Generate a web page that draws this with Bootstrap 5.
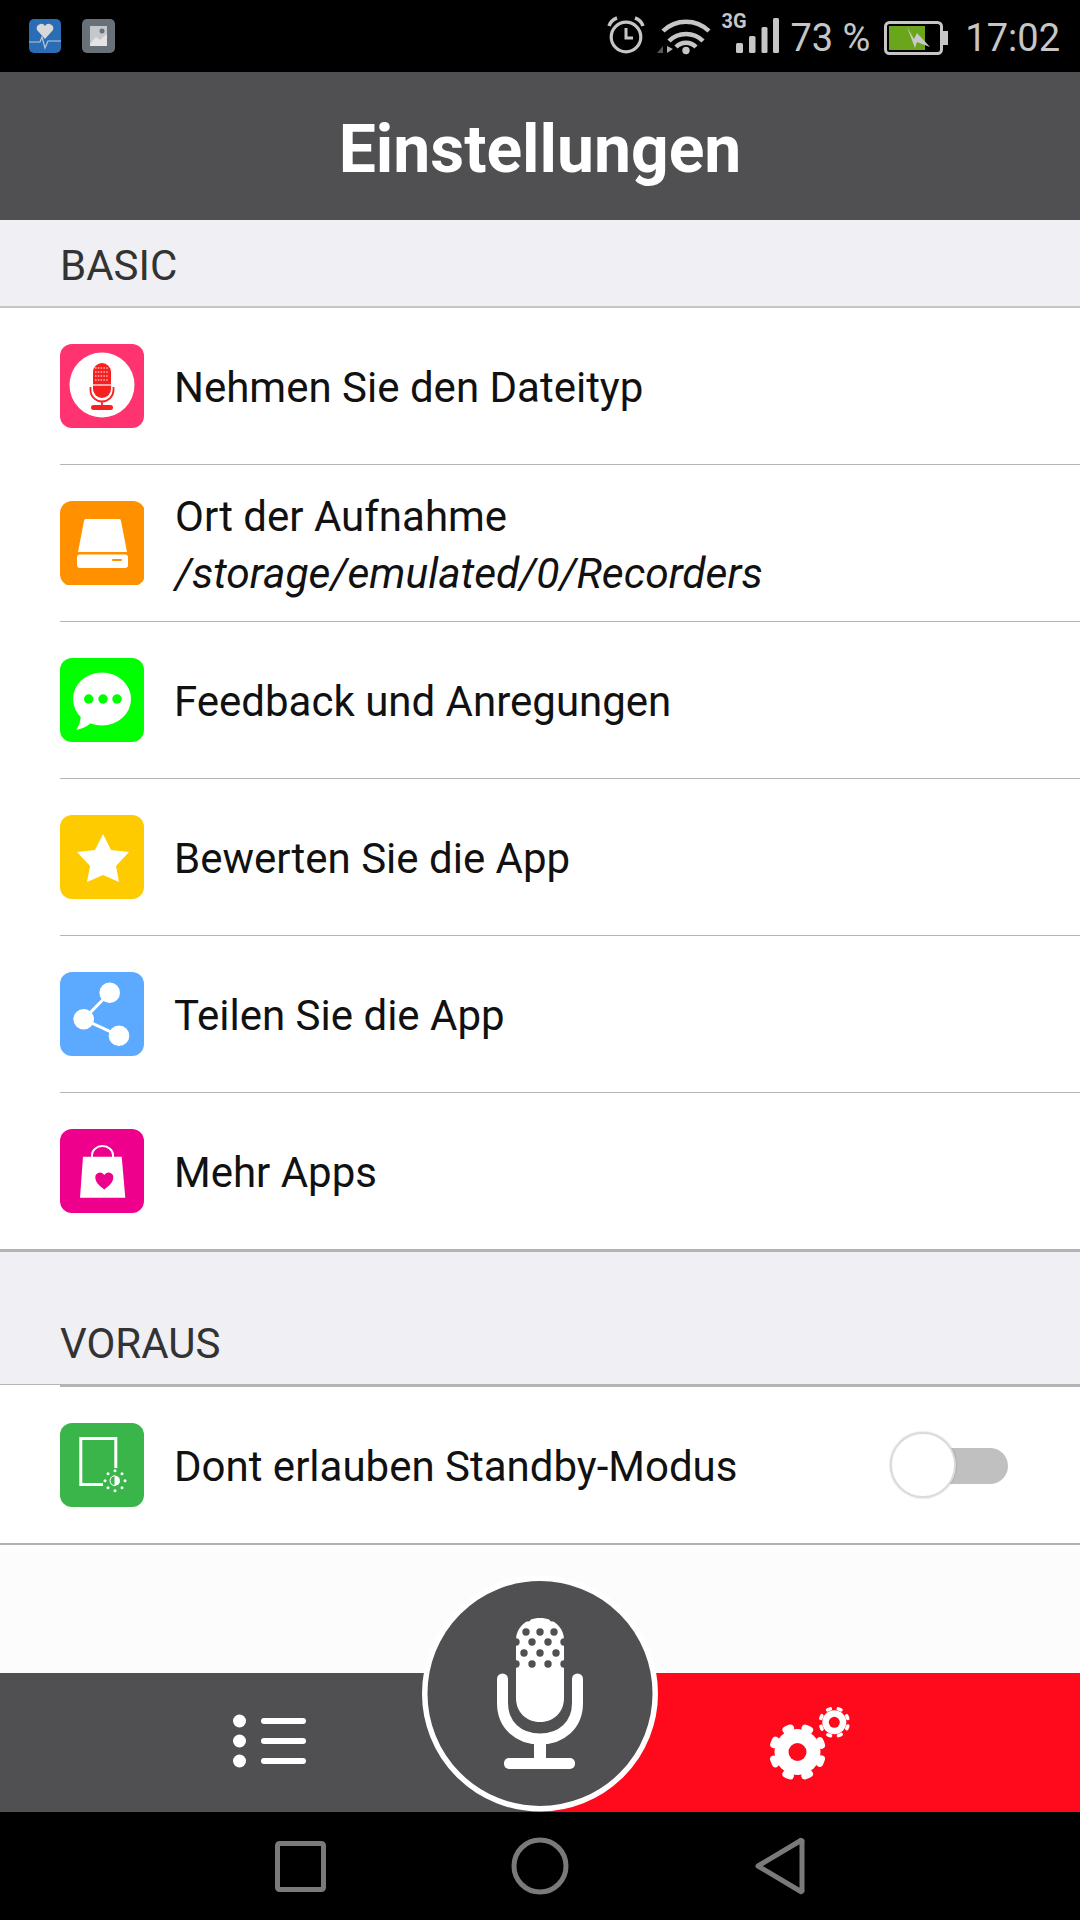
<!DOCTYPE html>
<html lang="de">
<head>
<meta charset="UTF-8">
<meta name="viewport" content="width=device-width, initial-scale=1.0">
<title>Einstellungen</title>
<link href="https://cdn.jsdelivr.net/npm/bootstrap@5.3.5/dist/css/bootstrap.min.css" rel="stylesheet">
<style>
html, body { margin: 0; width: 1080px; height: 1920px; overflow: hidden; }
body { font-family: Roboto, "Liberation Sans", sans-serif; background: #fff; color: #111; }
.app-frame { width: 1080px; height: 1920px; }
.status-strip { height: 72px; background: #000; color: #c6c6c6; font-size: 38px; padding: 13px 20px 0 29px; line-height: 1; }
.status-strip svg { display: block; }
.status-num { margin-top: 6px; }
.title-strip { height: 148px; background: #505052; color: #fff; font-size: 66px; font-weight: 700; padding-top: 6px; }
.section-strip { background: #efeff4; color: #333; font-size: 42px; padding: 0 0 15px 60px; line-height: 1.2; position: relative; }
.section-first { height: 88px; border-bottom: 2px solid #c4c4c6; }
.section-next { height: 136px; margin-top: -1px; border-top: 3px solid #b4b4b4; border-bottom: 1px solid #b4b4b4; }
.section-next::after { content: ""; position: absolute; left: 60px; right: 0; bottom: -3px; height: 3px; background: #b4b4b4; }
.set-row { height: 157px; margin-left: 60px; border-bottom: 1px solid #b4b4b4; font-size: 42px; line-height: 57px; gap: 30px; }
.set-row.row-plain { border-bottom: 0; padding-bottom: 1px; }
.set-row.row-last { height: 160px; margin-left: 0; padding: 2px 0 0 60px; border-bottom: 2px solid #b0b0b0; }
.row-text { margin-top: 3px; }
.row-text-two { margin-top: 4px; margin-left: 1px; }
.tile { width: 84px; height: 84px; flex: none; display: block; }
.path-line { font-style: italic; font-size: 42.5px; }
.toggle-box { position: relative; width: 118px; height: 66px; margin-left: auto; margin-right: 72px; flex: none; }
.toggle-track { position: absolute; right: 0; top: 16px; width: 90px; height: 36px; border-radius: 18px; background: #c0c0c0; }
.toggle-thumb { position: absolute; left: 0; top: 0; width: 66px; height: 66px; border-radius: 50%; background: #fff; border: 2px solid #dcdcdc; box-shadow: 0 0 2px rgba(0,0,0,.25); }
.spacer-fill { background: #fcfcfc; }
.tab-strip { height: 139px; position: relative; }
.tab-left { background: #505052; }
.tab-right { background: #ff0a1c; }
.tab-left, .tab-right { width: 540px; }
.mic-disc { position: absolute; left: 420px; top: -101px; width: 240px; height: 240px; display: block; }
.nav-strip { height: 108px; background: #000; }
</style>
</head>
<body>
<div class="app-frame d-flex flex-column">

  <div class="status-strip d-flex align-items-start">
    <svg width="32" height="34" viewBox="0 0 32 34" class="me-4" style="margin-top:6px">
      <rect width="32" height="34" rx="5" fill="#2a6db5"/>
      <path d="M16 20l-8-9a4.500 4.500 0 0 1 8-4a4.500 4.500 0 0 1 8 4z" fill="#d8d8d8"/>
      <path d="M0 23h11l2 -5 3 11 3-7h13" fill="none" stroke="#b9c9da" stroke-width="1.2"/>
    </svg>
    <svg width="33" height="34" viewBox="0 0 33 34" style="margin:6px 0 0 -3px">
      <rect width="33" height="34" rx="5" fill="#687078"/>
      <rect x="8" y="7" width="17" height="20" fill="#c4c8cc"/>
      <path d="M8 25l6-7 4 3 7-6v12H8z" fill="#e4e4e4"/>
      <circle cx="20" cy="12" r="2.500" fill="#687078"/>
    </svg>
    <div class="ms-auto d-flex align-items-start">
      <svg width="180" height="54" viewBox="603 5 180 54" fill="none" stroke="#c6c6c6" style="margin-top:-8px">
        <circle cx="627" cy="37" r="14.800" stroke-width="3.200"/>
        <path d="M627 28v10h7" stroke-width="3"/>
        <path d="M610 26q2-6 8-8M644 26q-2-6-8-8" stroke-width="3.500"/>
        <path d="M664 31a33 33 0 0 1 46 0M670 41a24 24 0 0 1 34 0M677 47a14 14 0 0 1 20 0" stroke-width="4.500"/>
        <circle cx="687" cy="50.500" r="3.700" fill="#c6c6c6" stroke="none"/>
        <path d="M664 46v7h-6z" fill="#555" stroke="none"/>
        <path d="M668 46v7l6-4z" fill="#b0b0b0" stroke="none"/>
        <g fill="#c6c6c6" stroke="none">
          <rect x="737" y="43" width="7" height="10" rx="1.500"/>
          <rect x="750" y="36" width="6.500" height="17" rx="1.500"/>
          <rect x="762.500" y="27" width="6" height="26" rx="1.500"/>
          <rect x="774" y="18" width="6" height="35" rx="1.500"/>
          <text x="722.500" y="27.500" font-family="Roboto, sans-serif" font-size="20" font-weight="700">3G</text>
        </g>
      </svg>
      <span class="status-num ms-2" style="margin-right:14px">73 %</span>
      <svg width="64" height="34" viewBox="0 0 64 34" style="margin-top:8px">
        <rect x="1.500" y="1.500" width="56" height="31" rx="4" fill="none" stroke="#c6c6c6" stroke-width="3"/>
        <rect x="59" y="10" width="5" height="14" fill="#c6c6c6"/>
        <rect x="5" y="5" width="36" height="24" fill="#6aa51c"/>
        <path d="M23 6L30 18L33 12L46 26L33 21L31 27z" fill="#c9c9c9"/>
      </svg>
      <span class="status-num" style="margin-left:17px">17:02</span>
    </div>
  </div>

  <div class="title-strip d-flex align-items-center justify-content-center">Einstellungen</div>

  <div class="section-strip section-first d-flex align-items-end">BASIC</div>

  <div class="set-row d-flex align-items-center">
    <svg class="tile" viewBox="0 0 84 84">
      <rect width="84" height="84" rx="12" fill="#ff3370"/>
      <circle cx="42" cy="41" r="32.500" fill="#fff"/>
      <rect x="33" y="19" width="18" height="35" rx="9" fill="#f72020"/>
      <path d="M35 24h14M35 28h14M35 32h14M35 36h14" fill="none" stroke="#fff" stroke-width="1.100" stroke-dasharray="1.500 1.300"/>
      <path d="M33 41h18" stroke="#fff" stroke-width="1.200"/>
      <path d="M30.500 43v3a11.500 11.500 0 0 0 23 0v-3M42 57v5" fill="none" stroke="#f72020" stroke-width="1.800"/>
      <rect x="31" y="61" width="22" height="5" rx="2.500" fill="#f72020"/>
    </svg>
    <span class="row-text">Nehmen Sie den Dateityp</span>
  </div>

  <div class="set-row d-flex align-items-center">
    <svg class="tile" viewBox="0 0 84 84">
      <rect width="85" height="85" rx="12" fill="#ff9100"/>
      <path d="M26 18h33a2 2 0 0 1 2 2l6 31H18l6-31a2 2 0 0 1 2-2z" fill="#fff"/>
      <rect x="17" y="53.500" width="51" height="13.500" rx="3" fill="#fff"/>
      <rect x="52" y="58" width="10" height="2" rx="1" fill="#ff9100"/>
    </svg>
    <div class="row-text-two">Ort der Aufnahme<br><span class="path-line">/storage/emulated/0/Recorders</span></div>
  </div>

  <div class="set-row d-flex align-items-center">
    <svg class="tile" viewBox="0 0 84 84">
      <rect width="84" height="84" rx="12" fill="#00ff00"/>
      <ellipse cx="42" cy="41" rx="29" ry="26.500" fill="#fff"/>
      <path d="M21 55c0 7-2 13-5 17 5-1 10-3 15-7z" fill="#fff"/>
      <g fill="#00ff00"><circle cx="28.700" cy="41" r="4.700"/><circle cx="43" cy="41" r="4.700"/><circle cx="57" cy="41" r="4.700"/></g>
    </svg>
    <span class="row-text">Feedback und Anregungen</span>
  </div>

  <div class="set-row d-flex align-items-center">
    <svg class="tile" viewBox="0 0 84 84">
      <rect width="84" height="84" rx="12" fill="#fdcb00"/>
      <path d="M43 19l8 16 18 2-13 14 3 16-16-7-16 7 3-16-13-14 18-2z" fill="#fff"/>
    </svg>
    <span class="row-text">Bewerten Sie die App</span>
  </div>

  <div class="set-row d-flex align-items-center">
    <svg class="tile" viewBox="0 0 84 84">
      <rect width="84" height="84" rx="12" fill="#5caaff"/>
      <path d="M49.700 20.700L23.700 47.300L59 63.700" fill="none" stroke="#fff" stroke-width="3"/>
      <circle cx="49.700" cy="20.700" r="10.300" fill="#fff"/><circle cx="23.700" cy="47.300" r="10.300" fill="#fff"/><circle cx="59" cy="63.700" r="10.300" fill="#fff"/>
    </svg>
    <span class="row-text">Teilen Sie die App</span>
  </div>

  <div class="set-row row-plain d-flex align-items-center">
    <svg class="tile" viewBox="0 0 84 84">
      <rect width="84" height="84" rx="12" fill="#ee008c"/>
      <path d="M23 27.700h38.700l3.600 41H20z" fill="#fff"/>
      <path d="M32 28v-2a10.500 9 0 0 1 21 0v2" fill="none" stroke="#fff" stroke-width="2"/>
      <path d="M44.300 60.600c-4-3-9-7-9-12a4.800 4.800 0 0 1 9-2.500a4.800 4.800 0 0 1 9 2.500c0 5-5 9-9 12z" fill="#ee008c"/>
    </svg>
    <span class="row-text">Mehr Apps</span>
  </div>

  <div class="section-strip section-next d-flex align-items-end">VORAUS</div>

  <div class="set-row row-last d-flex align-items-center">
    <svg class="tile" viewBox="0 0 84 84">
      <rect width="84" height="84" rx="12" fill="#3ab54a"/>
      <path d="M43 61.500H20.800V15.500H55.800V45" fill="none" stroke="#fff" stroke-width="3"/>
      <circle cx="55" cy="57.700" r="5" fill="#fff"/>
      <path d="M55 52.700a5 5 0 0 0 0 10z" fill="#3ab54a" stroke="#fff" stroke-width="1"/>
      <g fill="#fff"><circle cx="55" cy="47.700" r="1.500"/><circle cx="62" cy="50.700" r="1.500"/><circle cx="65" cy="57.700" r="1.500"/><circle cx="62" cy="64.700" r="1.500"/><circle cx="55" cy="67.700" r="1.500"/><circle cx="48" cy="64.700" r="1.500"/><circle cx="45" cy="57.700" r="1.500"/><circle cx="48" cy="50.700" r="1.500"/></g>
    </svg>
    <span class="row-text">Dont erlauben Standby-Modus</span>
    <div class="toggle-box">
      <div class="toggle-track"></div>
      <div class="toggle-thumb"></div>
    </div>
  </div>

  <div class="flex-grow-1 spacer-fill"></div>

  <div class="tab-strip d-flex">
    <div class="tab-left">
      <svg width="540" height="139" viewBox="0 1673 540 139" class="d-block">
        <g fill="#fff">
          <circle cx="239.500" cy="1721" r="6.500"/><circle cx="239.500" cy="1741" r="6.500"/><circle cx="239.500" cy="1761" r="6.500"/>
          <rect x="261" y="1718" width="45" height="6" rx="3"/><rect x="261" y="1738" width="45" height="6" rx="3"/><rect x="261" y="1758" width="45" height="6" rx="3"/>
        </g>
      </svg>
    </div>
    <div class="tab-right">
      <svg width="540" height="139" viewBox="540 1673 540 139" class="d-block">
        <circle cx="797.500" cy="1752" r="23" fill="#fff"/>
        <circle cx="797.500" cy="1752" r="25" fill="none" stroke="#fff" stroke-width="7" stroke-dasharray="5 14.630" stroke-linecap="round" transform="rotate(16 797.500 1752)"/>
        <circle cx="797.500" cy="1752" r="9" fill="#ff0a1c"/>
        <circle cx="834.300" cy="1722.300" r="12" fill="#fff"/>
        <circle cx="834.300" cy="1722.300" r="14" fill="none" stroke="#fff" stroke-width="3.500" stroke-dasharray="3 7.990" stroke-linecap="round" transform="rotate(15 834.300 1722.300)"/>
        <circle cx="834.300" cy="1722.300" r="5.500" fill="#ff0a1c"/>
      </svg>
    </div>
    <svg class="mic-disc" viewBox="420 1572 240 240">
      <circle cx="540" cy="1693.500" r="115.250" fill="#505052" stroke="#fff" stroke-width="5.500"/>
      <path d="M516 1640c0-12 10-22 24-22s24 10 24 22v58c0 14-10 24-24 24s-24-10-24-24z" fill="#fff"/>
      <g fill="#505052">
        <circle cx="526" cy="1632" r="3.700"/><circle cx="540" cy="1632" r="3.700"/><circle cx="554" cy="1632" r="3.700"/>
        <circle cx="516" cy="1642" r="3.700"/><circle cx="532" cy="1642" r="3.700"/><circle cx="548" cy="1642" r="3.700"/><circle cx="564" cy="1642" r="3.700"/>
        <circle cx="524" cy="1653" r="3.700"/><circle cx="540" cy="1653" r="3.700"/><circle cx="556" cy="1653" r="3.700"/>
        <circle cx="516" cy="1664" r="3.700"/><circle cx="532" cy="1664" r="3.700"/><circle cx="548" cy="1664" r="3.700"/><circle cx="564" cy="1664" r="3.700"/>
        <circle cx="528" cy="1619" r="2.500"/><circle cx="552" cy="1619" r="2.500"/>
      </g>
      <path d="M502.500 1679v24c0 22 16 36 37.500 36s37.500-14 37.500-36v-24" fill="none" stroke="#fff" stroke-width="11" stroke-linecap="round"/>
      <rect x="534" y="1738" width="12" height="22" fill="#fff"/>
      <rect x="504" y="1758" width="71" height="11" rx="5" fill="#fff"/>
    </svg>
  </div>

  <div class="nav-strip">
    <svg width="1080" height="108" viewBox="0 1812 1080 108" class="d-block" fill="none" stroke="#7a7a7a" stroke-width="5" stroke-linejoin="round">
      <rect x="277.500" y="1843.500" width="46" height="46" rx="2"/>
      <circle cx="540" cy="1866" r="26"/>
      <path d="M802 1842v48a1 1 0 0 1-2 1l-42-25 42-25a1 1 0 0 1 2 1z"/>
    </svg>
  </div>
</div>
<script src="https://cdn.jsdelivr.net/npm/bootstrap@5.3.5/dist/js/bootstrap.bundle.min.js"></script>
</body>
</html>
